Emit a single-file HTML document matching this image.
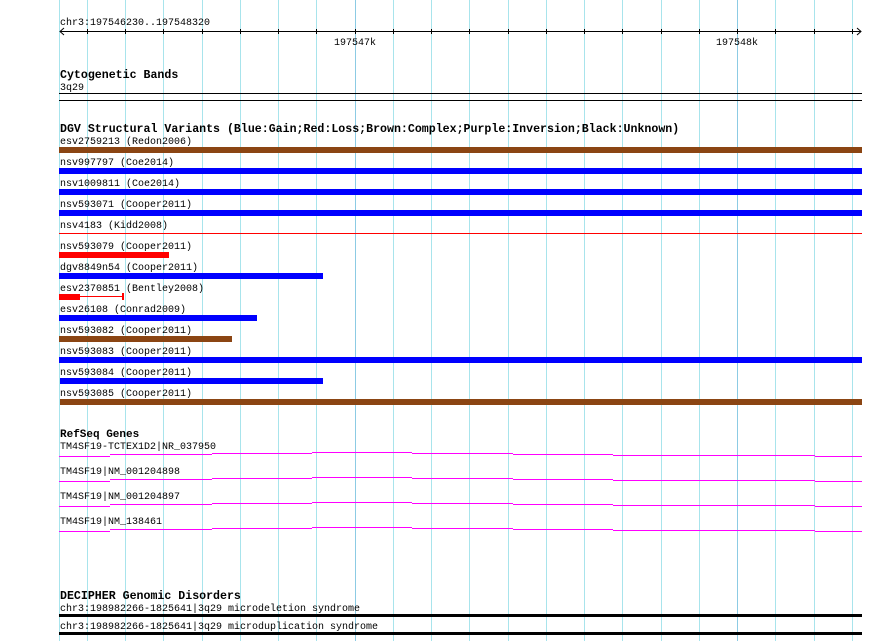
<!DOCTYPE html>
<html><head><meta charset="utf-8"><style>
html,body{margin:0;padding:0;background:#fff;}
svg{display:block}
text{font-family:"Liberation Mono",monospace;font-size:10px;fill:#000}
.b{font-weight:bold;font-size:11.6px}
</style></head><body>
<svg width="890" height="641" viewBox="0 0 890 641" xmlns="http://www.w3.org/2000/svg">
<g id="grid" stroke="#a8e4ec" stroke-width="1">
<line x1="59.5" y1="0" x2="59.5" y2="641"/>
<line x1="87.5" y1="0" x2="87.5" y2="641"/>
<line x1="125.5" y1="0" x2="125.5" y2="641"/>
<line x1="163.5" y1="0" x2="163.5" y2="641"/>
<line x1="202.5" y1="0" x2="202.5" y2="641"/>
<line x1="240.5" y1="0" x2="240.5" y2="641"/>
<line x1="278.5" y1="0" x2="278.5" y2="641"/>
<line x1="316.5" y1="0" x2="316.5" y2="641"/>
<line x1="355.5" y1="0" x2="355.5" y2="641" stroke="#8ccbe4"/>
<line x1="393.5" y1="0" x2="393.5" y2="641"/>
<line x1="431.5" y1="0" x2="431.5" y2="641"/>
<line x1="469.5" y1="0" x2="469.5" y2="641"/>
<line x1="508.5" y1="0" x2="508.5" y2="641"/>
<line x1="546.5" y1="0" x2="546.5" y2="641"/>
<line x1="584.5" y1="0" x2="584.5" y2="641"/>
<line x1="622.5" y1="0" x2="622.5" y2="641"/>
<line x1="661.5" y1="0" x2="661.5" y2="641"/>
<line x1="699.5" y1="0" x2="699.5" y2="641"/>
<line x1="737.5" y1="0" x2="737.5" y2="641" stroke="#8ccbe4"/>
<line x1="775.5" y1="0" x2="775.5" y2="641"/>
<line x1="814.5" y1="0" x2="814.5" y2="641"/>
<line x1="852.5" y1="0" x2="852.5" y2="641"/>
</g>
<!-- ruler -->
<text x="60" y="25">chr3:197546230..197548320</text>
<g stroke="#000" stroke-width="1" fill="none">
<line x1="60" y1="31.5" x2="861" y2="31.5"/>
<polyline points="64,28 60,31.5 64,35"/>
<polyline points="857,28 861,31.5 857,35"/>
<path d="M87.5 29v5M125.5 29v5M163.5 29v5M202.5 29v5M240.5 29v5M278.5 29v5M316.5 29v5M355.5 29v5M393.5 29v5M431.5 29v5M469.5 29v5M508.5 29v5M546.5 29v5M584.5 29v5M622.5 29v5M661.5 29v5M699.5 29v5M737.5 29v5M775.5 29v5M814.5 29v5M852.5 29v5"/>
</g>
<text x="334" y="45">197547k</text>
<text x="716" y="45">197548k</text>
<!-- cyto -->
<text class="b" x="60" y="78">Cytogenetic Bands</text>
<text x="60" y="90">3q29</text>
<rect x="59" y="93" width="803" height="1" fill="#000"/>
<rect x="59" y="100" width="803" height="1" fill="#000"/>
<!-- DGV -->
<text class="b" x="60" y="132">DGV Structural Variants (Blue:Gain;Red:Loss;Brown:Complex;Purple:Inversion;Black:Unknown)</text>
<text x="60" y="144">esv2759213 (Redon2006)</text>
<rect x="59" y="147" width="803" height="6" fill="#8b4513"/>
<text x="60" y="165">nsv997797 (Coe2014)</text>
<rect x="59" y="168" width="803" height="6" fill="#0000ff"/>
<text x="60" y="186">nsv1009811 (Coe2014)</text>
<rect x="59" y="189" width="803" height="6" fill="#0000ff"/>
<text x="60" y="207">nsv593071 (Cooper2011)</text>
<rect x="59" y="210" width="803" height="6" fill="#0000ff"/>
<text x="60" y="228">nsv4183 (Kidd2008)</text>
<rect x="59" y="233" width="803" height="1" fill="#ff0000"/>
<text x="60" y="249">nsv593079 (Cooper2011)</text>
<rect x="59" y="252" width="110" height="6" fill="#ff0000"/>
<text x="60" y="270">dgv8849n54 (Cooper2011)</text>
<rect x="59" y="273" width="264" height="6" fill="#0000ff"/>
<text x="60" y="291">esv2370851 (Bentley2008)</text>
<rect x="59" y="294" width="21" height="6" fill="#ff0000"/>
<rect x="80" y="296" width="43" height="1" fill="#ff0000"/>
<rect x="122" y="293" width="2" height="7" fill="#ff0000"/>
<text x="60" y="312">esv26108 (Conrad2009)</text>
<rect x="59" y="315" width="198" height="6" fill="#0000ff"/>
<text x="60" y="333">nsv593082 (Cooper2011)</text>
<rect x="59" y="336" width="173" height="6" fill="#8b4513"/>
<text x="60" y="354">nsv593083 (Cooper2011)</text>
<rect x="59" y="357" width="803" height="6" fill="#0000ff"/>
<text x="60" y="375">nsv593084 (Cooper2011)</text>
<rect x="60" y="378" width="263" height="6" fill="#0000ff"/>
<text x="60" y="396">nsv593085 (Cooper2011)</text>
<rect x="60" y="399" width="802" height="6" fill="#8b4513"/>
<!-- RefSeq -->
<text class="b" x="60" y="437" style="font-size:11px">RefSeq Genes</text>
<g fill="#ff00ff">
<path id="g" d="M59 456h51v1h-51zM110 454h102v1h-102zM212 453h100v1h-100zM312 452h100v1h-100zM412 453h101v1h-101zM513 454h100v1h-100zM613 455h100v1h-100zM713 455h102v1h-102zM815 456h47v1h-47z"/>
<path transform="translate(0,25)" d="M59 456h51v1h-51zM110 454h102v1h-102zM212 453h100v1h-100zM312 452h100v1h-100zM412 453h101v1h-101zM513 454h100v1h-100zM613 455h100v1h-100zM713 455h102v1h-102zM815 456h47v1h-47z"/>
<path transform="translate(0,50)" d="M59 456h51v1h-51zM110 454h102v1h-102zM212 453h100v1h-100zM312 452h100v1h-100zM412 453h101v1h-101zM513 454h100v1h-100zM613 455h100v1h-100zM713 455h102v1h-102zM815 456h47v1h-47z"/>
<path transform="translate(0,75)" d="M59 456h51v1h-51zM110 454h102v1h-102zM212 453h100v1h-100zM312 452h100v1h-100zM412 453h101v1h-101zM513 454h100v1h-100zM613 455h100v1h-100zM713 455h102v1h-102zM815 456h47v1h-47z"/>
</g>
<text x="60" y="449">TM4SF19-TCTEX1D2|NR_037950</text>
<text x="60" y="474">TM4SF19|NM_001204898</text>
<text x="60" y="499">TM4SF19|NM_001204897</text>
<text x="60" y="524">TM4SF19|NM_138461</text>
<!-- DECIPHER -->
<text class="b" x="60" y="599">DECIPHER Genomic Disorders</text>
<text x="60" y="611">chr3:198982266-1825641|3q29 microdeletion syndrome</text>
<rect x="59" y="614" width="803" height="3" fill="#000"/>
<text x="60" y="629">chr3:198982266-1825641|3q29 microduplication syndrome</text>
<rect x="59" y="632" width="803" height="3" fill="#000"/>
</svg>
</body></html>
